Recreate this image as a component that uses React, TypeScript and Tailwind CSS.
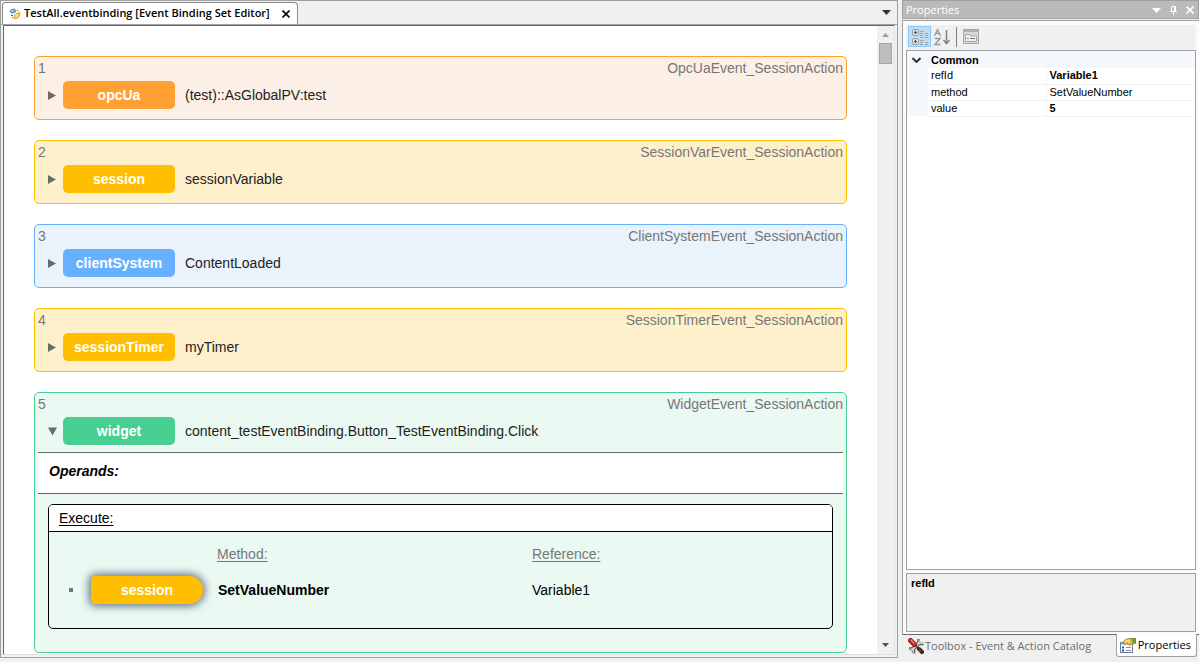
import clsx from 'clsx';

type Row = {
  id: number;
  label: string;
  source: string;
  kind: string;
  card: string;
  badge: string;
};

const rows: Row[] = [
  {
    id: 1,
    label: 'opcUa',
    source: '(test)::AsGlobalPV:test',
    kind: 'OpcUaEvent_SessionAction',
    card: 'border-[#ffa033] bg-[#fcf0e6]',
    badge: 'bg-[#ffa033]',
  },
  {
    id: 2,
    label: 'session',
    source: 'sessionVariable',
    kind: 'SessionVarEvent_SessionAction',
    card: 'border-[#ffbf00] bg-[#fff0cc]',
    badge: 'bg-[#ffbf00]',
  },
  {
    id: 3,
    label: 'clientSystem',
    source: 'ContentLoaded',
    kind: 'ClientSystemEvent_SessionAction',
    card: 'border-[#66b0ff] bg-[#eaf2fb]',
    badge: 'bg-[#66b0ff]',
  },
  {
    id: 4,
    label: 'sessionTimer',
    source: 'myTimer',
    kind: 'SessionTimerEvent_SessionAction',
    card: 'border-[#ffbf00] bg-[#fff0cc]',
    badge: 'bg-[#ffbf00]',
  },
  {
    id: 5,
    label: 'widget',
    source: 'content_testEventBinding.Button_TestEventBinding.Click',
    kind: 'WidgetEvent_SessionAction',
    card: 'border-[#48ce90] bg-[#eaf9f2]',
    badge: 'bg-[#48ce90]',
  },
];

const properties = [
  { name: 'refId', value: 'Variable1', bold: true },
  { name: 'method', value: 'SetValueNumber', bold: false },
  { name: 'value', value: '5', bold: true },
];

function BindingIcon() {
  return (
    <svg width="12" height="12" viewBox="0 0 12 12" className="shrink-0">
      <path d="M0.5 3.5 2 1 5.5 0.5 7.5 2.5 6 5 2.5 5.5z" fill="#5b9bd5" />
      <path d="M2 3 4 1.5 5 2.5 3.5 4z" fill="#b8d8f2" />
      <path d="M5 7 7.5 5 11 3.5 11.5 6 10 9.5 7 11.5 4.5 11z" fill="#e9b63a" />
      <path d="M6.5 7.5 9.5 5.5 9 8 6.5 10z" fill="#fbe7a6" />
      <path d="M2 7.5h2M3 9.5h1M8 2.5h1" stroke="#555" />
    </svg>
  );
}

function CategoryIcon() {
  return (
    <svg width="18" height="18" viewBox="0 0 18 18" fill="none">
      {[1, 10].map((y) => (
        <g key={y} transform={`translate(1 ${y})`}>
          <rect x="0.5" y="0.5" width="6" height="6" rx="1.5" fill="#d5dce2" stroke="#9aa3a9" />
          <path d="M2 3.5h3M3.5 2v3" stroke="#555" />
        </g>
      ))}
      <path
        d="M9 3.5h4M9 12.5h4M9 5.5h3M9 7.5h3M9 9.5h3M9 14.5h3M9 16.5h3M14 5.5h3M14 7.5h3M14 9.5h3M14 14.5h3M14 16.5h3"
        stroke="#93a7b5"
      />
    </svg>
  );
}

function SortIcon() {
  return (
    <svg width="18" height="18" viewBox="0 0 18 18" fill="none" stroke="#9a9a9a">
      <path d="M1.5 8 4.5 1.5 7.5 8M2.5 5.5h4" strokeWidth="1.3" />
      <path d="M2 10.5h5L2 16.5h5.5" strokeWidth="1.5" />
      <path d="M13.5 2v13M10.5 12l3 3.5 3-3.5" strokeWidth="1.5" stroke="#808080" />
    </svg>
  );
}

function PagesIcon() {
  return (
    <svg width="16" height="15" viewBox="0 0 16 15" fill="none" stroke="#a8a8a8">
      <rect x="0.5" y="0.5" width="15" height="14" fill="#d8d8d8" />
      <path d="M1 2h14" strokeWidth="2" stroke="#b0b0b0" />
      <path d="M2.5 12.5v-7h4l1 1.5h6v5.5z" fill="#f2f2f2" />
      <path d="M4 9.5h1.5M7 9.5h5" stroke="#777" />
    </svg>
  );
}

function ToolboxIcon() {
  return (
    <svg width="16" height="16" viewBox="0 0 16 16" fill="none">
      <path d="M3 13 12 4" stroke="#555" strokeWidth="4" />
      <path d="M10.5 1v3.5L12 6h3.5M1 10.5h3.5L6 12v3.5" stroke="#5c5c5c" strokeWidth="2.5" />
      <path d="M3 13 12 4" stroke="#dcdcdc" strokeWidth="2" />
      <path d="M11 1.5v3l1 1h3M1.5 11h3l1 1v3" stroke="#d0d0d0" />
      <path d="m2.5 2.5 4 4" stroke="#8f1610" strokeWidth="5" strokeLinecap="round" />
      <path d="m2.5 2 4 4" stroke="#dd3d34" strokeWidth="3" strokeLinecap="round" />
      <path d="m3 2 3 3" stroke="#f19a92" />
      <path d="m8 8 3 3" stroke="#555" strokeWidth="2" />
      <path d="m11 11 3 3" stroke="#402020" strokeWidth="4" strokeLinecap="round" />
      <path d="m11 12 1.5 1.5" stroke="#c9382e" strokeWidth="2" />
    </svg>
  );
}

function PropertiesIcon() {
  return (
    <svg width="16" height="15" viewBox="0 0 16 15" fill="none">
      <rect x="0.5" y="4.5" width="12" height="10" fill="#fff" stroke="#6b7c96" />
      <path d="M1 5.5h11" stroke="#7da7e0" strokeWidth="2" />
      <path d="M2 9.5h2M2 12.5h2" stroke="#2558b0" strokeWidth="2" />
      <path d="M6 9.5h5M6 12.5h5" stroke="#8090a8" />
      <path d="M3 4 5.5 1.5 8 0.5h8v5h-3L9 7.5 7 5.5 4 6.5z" fill="#e9bd38" stroke="#806018" strokeWidth="0.6" />
      <path d="M11 0.5h5v4.5h-3z" fill="#5f9a3e" />
      <path d="m5 4 3-2 2 2" stroke="#fff3a8" />
    </svg>
  );
}

function Badge({ label, className }: { label: string; className: string }) {
  return (
    <span
      className={clsx(
        'flex h-7 w-28 shrink-0 items-center justify-center font-bold text-white',
        className,
      )}
    >
      {label}
    </span>
  );
}

function EventDetails() {
  return (
    <div className="px-[3px] pb-[23px]">
      <div className="h-[42px] border-y border-[#666] bg-white px-[11px] pt-2 font-bold italic text-black">
        Operands:
      </div>
      <section className="mx-[10px] mt-[10px] rounded-[5px] border border-black">
        <h3 className="h-[27px] rounded-t-[4px] border-b border-black bg-white px-[10px] pt-[3px] text-black underline underline-offset-2">
          Execute:
        </h3>
        <div className="grid h-24 grid-cols-[168px_315px_1fr] grid-rows-[44px_28px] text-[#777]">
          <span className="col-start-2 self-center underline underline-offset-2">Method:</span>
          <span className="self-center underline underline-offset-2">Reference:</span>
          <div className="flex items-center">
            <span className="mr-[18px] ml-5 size-1 bg-[#777]" />
            <Badge
              label="session"
              className="rounded-l-[4px] rounded-r-[14px] bg-[#ffbf00] shadow-[0_0_8px_2px_#607080]"
            />
          </div>
          <span className="self-center pl-px font-bold text-black">SetValueNumber</span>
          <span className="self-center text-black">Variable1</span>
        </div>
      </section>
    </div>
  );
}

function EventCard({ row }: { row: Row }) {
  const open = row.id === 5;

  return (
    <article className={clsx('rounded-[5px] border', row.card)}>
      <div className="flex h-6 items-start justify-between px-[3px] pt-px text-[#777]">
        <span>{row.id}</span>
        <span>{row.kind}</span>
      </div>
      <div className={clsx('flex items-start', open ? 'h-[35px]' : 'h-[38px]')}>
        <button aria-label={open ? 'Collapse' : 'Expand'} className="flex h-7 w-7 items-center pt-px pl-[13px]">
          <svg width="9" height="9" viewBox="0 0 9 9" fill="#6b6b6b">
            <path d={open ? 'M0 0.5h9L4.5 8.5z' : 'M0 0v9l8-4.5z'} />
          </svg>
        </button>
        <Badge label={row.label} className={clsx('rounded-[5px]', row.badge)} />
        <span className="ml-[10px] flex h-7 items-center">{row.source}</span>
      </div>
      {open && <EventDetails />}
    </article>
  );
}

function Editor() {
  return (
    <main className="mb-1 flex min-w-0 flex-1 flex-col border border-[#a0a0a0] bg-[#f0f0f0]">
      <header className="flex h-6 shrink-0 items-end justify-between border-b border-[#a0a0a0] pr-[6px] font-['Open_Sans',sans-serif] text-[11px]">
        <div className="ml-px flex h-[22px] items-center rounded-t-[4px] border border-b-0 border-[#888] bg-white pr-[7px] pl-[6px] font-semibold text-black">
          <BindingIcon />
          <span className="ml-[3px]">TestAll.eventbinding [Event Binding Set Editor]</span>
          <button aria-label="Close tab" className="ml-3">
            <svg width="8" height="8" viewBox="0 0 8 8" stroke="#000" strokeWidth="1.6">
              <path d="m0.5.5 7 7m0-7-7 7" />
            </svg>
          </button>
        </div>
        <button aria-label="Open documents" className="mb-[9px]">
          <svg width="9" height="5" viewBox="0 0 9 5" fill="#333">
            <path d="M0 0h9L4.5 5z" />
          </svg>
        </button>
      </header>
      <div className="mx-[2px] mb-[2px] flex min-h-0 flex-1 border border-[#e3e3e3] border-t-[#696969] border-l-[#696969] bg-white">
        <div className="flex min-w-0 flex-1 flex-col gap-5 overflow-hidden px-[30px] pt-[30px] font-['Liberation_Sans',sans-serif] text-sm text-[#222]">
          {rows.map((row) => (
            <EventCard key={row.id} row={row} />
          ))}
        </div>
        <div className="flex w-[17px] shrink-0 flex-col items-center bg-[#f0f0f0]">
          <svg width="7" height="4" viewBox="0 0 7 4" fill="#a0a0a0" className="mt-[7px]">
            <path d="M0 4h7L3.5 0z" />
          </svg>
          <div className="mt-[6px] h-[21px] w-[13px] border border-[#a6a6a6] bg-[#bdbdbd]" />
          <svg width="7" height="4" viewBox="0 0 7 4" fill="#505050" className="mt-auto mb-[7px]">
            <path d="M0 0h7L3.5 4z" />
          </svg>
        </div>
      </div>
    </main>
  );
}

function PropertyGrid() {
  return (
    <div className="mx-[3px] min-h-0 flex-1 border border-[#a0a0a0] bg-white text-[11px] leading-4 text-black">
      <table className="w-full table-fixed border-collapse">
        <colgroup>
          <col className="w-[21px]" />
          <col className="w-[118px]" />
          <col />
        </colgroup>
        <thead>
          <tr className="h-[17px] bg-[#f4f7fc]">
            <td className="p-0 pl-[5px]">
              <svg width="9" height="6" viewBox="0 0 9 6" fill="none" stroke="#333" strokeWidth="2">
                <path d="m0.5 1 4 4 4-4" />
              </svg>
            </td>
            <th colSpan={2} className="p-0 pt-px pl-[3px] text-left leading-4 font-bold">
              Common
            </th>
          </tr>
        </thead>
        <tbody>
          {properties.map((p) => (
            <tr key={p.name} className="h-4">
              <td className="bg-[#f4f7fc] p-0" />
              <td className="border-r border-b border-[#f0f3f8] p-0 pl-[3px] leading-[15px]">{p.name}</td>
              <td className={clsx('border-b border-[#f0f3f8] p-0 pl-[3px] leading-[15px]', p.bold && 'font-bold')}>
                {p.value}
              </td>
            </tr>
          ))}
        </tbody>
      </table>
    </div>
  );
}

function PropertiesPanel() {
  return (
    <aside className="flex w-[297px] shrink-0 flex-col font-['Liberation_Sans',sans-serif]">
      <header className="flex h-[19px] shrink-0 items-center border border-[#a0a0a0] bg-[#bababa] pt-px pr-1 pl-[3px] font-['Open_Sans',sans-serif] text-[11px] text-white">
        <h2 className="flex-1">Properties</h2>
        <div className="flex items-center gap-[9px]">
          <button aria-label="Window position">
            <svg width="9" height="5" viewBox="0 0 9 5" fill="#fff">
              <path d="M0 0h9L4.5 5z" />
            </svg>
          </button>
          <button aria-label="Auto hide">
            <svg width="7" height="9" viewBox="0 0 7 9" fill="none" stroke="#fff">
              <path d="M1.5 5V.5h4V5M0 5.5h7M3.5 6v3M4.5 1v4" />
            </svg>
          </button>
          <button aria-label="Close panel">
            <svg width="8" height="8" viewBox="0 0 8 8" stroke="#fff" strokeWidth="1.6">
              <path d="m0.5.5 7 7m0-7-7 7" />
            </svg>
          </button>
        </div>
      </header>
      <div className="mt-px flex min-h-0 flex-1 flex-col border border-r-0 border-[#a0a0a0] border-b-[#696969] bg-[#fbfbfb] pb-[2px]">
        <div className="mx-[3px] mt-1 flex h-[25px] shrink-0 items-center bg-[#f0f0f0] pb-[2px] pl-[2px]">
          <button
            aria-label="Categorized"
            className="flex h-[21px] w-[23px] items-center justify-center border border-[#90c8f6] bg-[#c0dcf3]"
          >
            <CategoryIcon />
          </button>
          <button aria-label="Alphabetical" className="ml-[2px]">
            <SortIcon />
          </button>
          <span className="ml-[5px] h-5 w-px bg-[#808080]" />
          <button aria-label="Property pages" className="ml-[6px]">
            <PagesIcon />
          </button>
        </div>
        <PropertyGrid />
        <div className="mx-[3px] mt-[3px] h-[59px] shrink-0 border border-[#a0a0a0] bg-[#f0f0f0] px-1 pt-px text-[11px] leading-4 font-bold text-black">
          refId
        </div>
      </div>
      <nav className="flex h-[27px] shrink-0 justify-between pr-[2px] font-['Open_Sans',sans-serif] text-[11px]">
        <button className="flex h-[22px] items-center gap-px pl-[6px] text-[#6d6d6d]">
          <ToolboxIcon />
          <span>Toolbox - Event &amp; Action Catalog</span>
        </button>
        <button className="-mt-px flex h-[23px] items-center gap-[2px] rounded-b-[3px] border border-t-0 border-[#a0a0a0] bg-white pr-[5px] pl-[3px] text-black">
          <PropertiesIcon />
          <span>Properties</span>
        </button>
      </nav>
    </aside>
  );
}

export default function App() {
  return (
    <div className="flex h-screen gap-1 overflow-hidden bg-[#f0f0f0]">
      <Editor />
      <PropertiesPanel />
    </div>
  );
}
